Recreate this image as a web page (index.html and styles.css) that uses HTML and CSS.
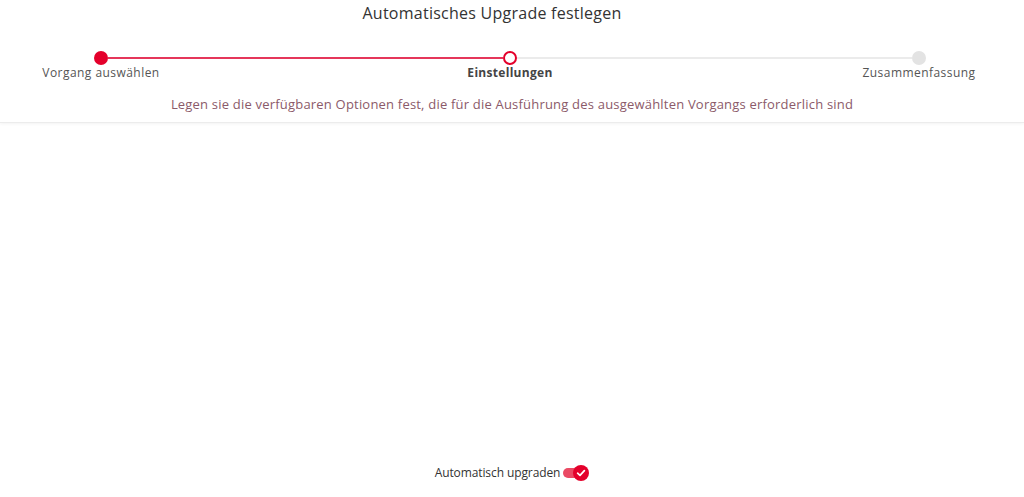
FILE: index.html
```html
<!DOCTYPE html>
<html lang="de">
<head>
<meta charset="utf-8">
<title>Automatisches Upgrade festlegen</title>
<link rel="stylesheet" href="styles.css">
</head>
<body>
<div class="page">
  <header class="head">
    <h1 class="title">Automatisches Upgrade festlegen</h1>
    <div class="stepper">
      <div class="track">
        <span class="dot dot-done"></span>
        <span class="line line-done"></span>
        <span class="dot dot-active"></span>
        <span class="line"></span>
        <span class="dot dot-todo"></span>
      </div>
      <div class="labels">
        <span class="label"><span>Vorgang auswählen</span></span>
        <span class="label label-active"><span>Einstellungen</span></span>
        <span class="label"><span>Zusammenfassung</span></span>
      </div>
    </div>
    <p class="subtitle">Legen sie die verfügbaren Optionen fest, die für die Ausführung des ausgewählten Vorgangs erforderlich sind</p>
  </header>
  <main class="body"></main>
  <footer class="foot">
    <span class="toggle-label">Automatisch upgraden</span>
    <span class="toggle">
      <span class="toggle-track"></span>
      <span class="toggle-thumb">
        <svg width="10" height="10" viewBox="0 0 10 10"><path d="M1.6 5.2 L4 7.4 L8.4 2.6" fill="none" stroke="#fff" stroke-width="1.7" stroke-linecap="round" stroke-linejoin="round"/></svg>
      </span>
    </span>
  </footer>
</div>
</body>
</html>
```
FILE: styles.css
```css
* { box-sizing: border-box; }
html, body { margin: 0; padding: 0; background: #fff; }
body {
  font-family: "Open Sans", "DejaVu Sans", sans-serif;
  color: #333;
  width: 1024px;
  height: 497px;
  overflow: hidden;
}
.page {
  display: flex;
  flex-direction: column;
  height: 497px;
}
.head {
  border-bottom: 1px solid #ececec;
  box-shadow: 0 1px 3px rgba(0,0,0,0.05);
}
.title {
  margin: 0;
  padding: 3px 40px 0 0;
  font-size: 16px;
  font-weight: 400;
  text-align: center;
  line-height: 20px;
  color: #333;
  letter-spacing: 0.25px;
}
.stepper {
  padding: 28px 98px 0 94px;
}
.track {
  display: flex;
  align-items: center;
  height: 14px;
}
.dot {
  width: 14px;
  height: 14px;
  border-radius: 50%;
  flex: none;
}
.dot-done { background: #e4002b; }
.dot-active { background: #fff; border: 2px solid #e4002b; }
.dot-todo { background: #e3e3e3; }
.line {
  flex: 1;
  height: 2px;
  background: #ebebeb;
}
.line-done { background: #e5365a; }
.labels {
  display: flex;
  justify-content: space-between;
  padding: 0 7px;
  margin-top: 0;
}
.label {
  width: 0;
  display: flex;
  justify-content: center;
  white-space: nowrap;
  font-size: 12px;
  line-height: 16px;
  color: #555;
  letter-spacing: 0.45px;
}
.label-active { font-weight: 700; color: #444; letter-spacing: 0.3px; }
.subtitle {
  margin: 0;
  padding: 14px 0 9px;
  text-align: center;
  font-size: 13px;
  line-height: 18px;
  color: #8b5a69;
  letter-spacing: 0.2px;
}
.body { flex: 1; }
.foot {
  display: flex;
  justify-content: center;
  align-items: center;
  gap: 3px;
  padding: 0 0 16px 0;
}
.toggle-label {
  font-size: 12px;
  line-height: 16px;
  color: #333;
  letter-spacing: -0.1px;
}
.toggle {
  position: relative;
  width: 26px;
  height: 16px;
  display: flex;
  align-items: center;
}
.toggle-track {
  width: 24px;
  height: 10px;
  border-radius: 5px;
  background: #ea4a64;
}
.toggle-thumb {
  position: absolute;
  right: 0;
  top: 0;
  width: 16px;
  height: 16px;
  border-radius: 50%;
  background: #e4002b;
  display: flex;
  align-items: center;
  justify-content: center;
}
```
